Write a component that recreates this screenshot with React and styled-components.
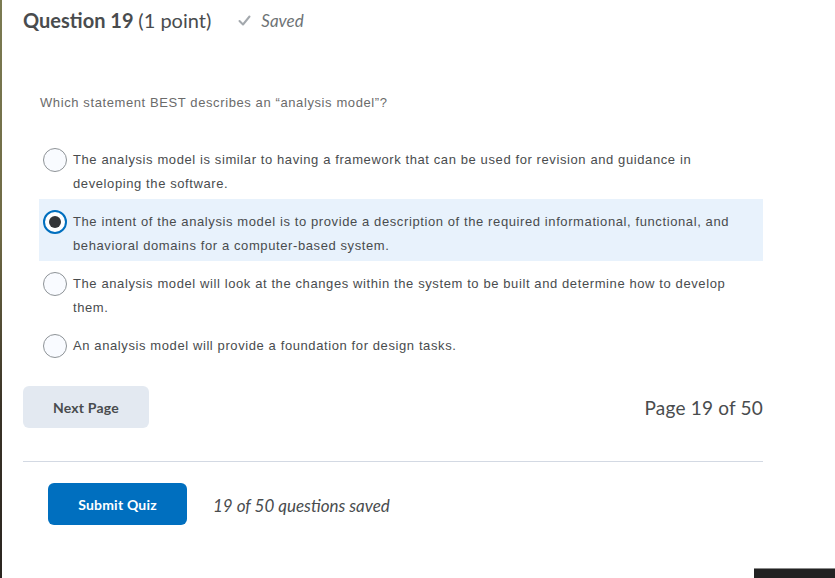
import React from "react";
import styled, { createGlobalStyle } from "styled-components";

const Global = createGlobalStyle`
  html, body { margin: 0; padding: 0; background: #fff; }
  body { font-family: "Lato", "Liberation Sans", sans-serif; }
  * { box-sizing: border-box; }
`;

const Page = styled.div`
  position: relative;
  width: 835px;
  height: 578px;
  overflow: hidden;
  background: #fff;
  border-left: 2px solid transparent;
  border-image: linear-gradient(to bottom, #7b7b52 0%, #6f6a45 40%, #3a3327 70%, #2a2520 100%) 1;
  padding-left: 21px;
`;

const Content = styled.div`
  width: 740px;
  display: flex;
  flex-direction: column;
`;

const Header = styled.div`
  display: flex;
  align-items: center;
  height: 24px;
  margin-top: 8px;
`;

const Title = styled.h2`
  margin: 0;
  font-family: "Lato", sans-serif;
  font-size: 20px;
  line-height: 24px;
  font-weight: 700;
  color: #494c4e;
`;

const Points = styled.span`
  font-weight: 400;
`;

const SavedTag = styled.div`
  display: flex;
  align-items: center;
  margin-left: 27px;
  gap: 10px;
  font-family: "Lato", sans-serif;
  font-style: italic;
  font-size: 17px;
  color: #6e7376;
`;

const QuestionBlock = styled.div`
  margin-top: 61px;
  margin-left: 16px;
  display: flex;
  flex-direction: column;
`;

const Prompt = styled.p`
  margin: 0 0 0 1px;
  font-family: "Liberation Sans", Arial, sans-serif;
  font-size: 13px;
  letter-spacing: 0.6px;
  line-height: 20px;
  color: #6b6b6b;
`;

const Options = styled.div`
  margin-top: 24px;
  display: flex;
  flex-direction: column;
`;

const OptionRow = styled.label`
  display: flex;
  align-items: flex-start;
  gap: 6px;
  padding: 11px 20px 3px 4px;
  background: ${(p) => (p.$selected ? "#e8f2fc" : "transparent")};
`;

const Radio = styled.span`
  flex: 0 0 24px;
  width: 24px;
  height: 24px;
  border-radius: 50%;
  display: flex;
  align-items: center;
  justify-content: center;
  background: ${(p) => (p.$checked ? "#fff" : "#f9fbff")};
  border: ${(p) => (p.$checked ? "2px solid #006fbf" : "1px solid #8e9397")};
`;

const Dot = styled.span`
  width: 12px;
  height: 12px;
  border-radius: 50%;
  background: #333537;
`;

const OptionText = styled.span`
  font-family: "Liberation Sans", Arial, sans-serif;
  font-size: 13px;
  letter-spacing: 0.6px;
  line-height: 24px;
  color: #494c4e;
`;

const NavRow = styled.div`
  margin-top: 25px;
  display: flex;
  align-items: center;
  justify-content: space-between;
`;

const Button = styled.button`
  height: 42px;
  border: none;
  border-radius: 6px;
  font-family: "Lato", sans-serif;
  font-weight: 700;
  font-size: 14px;
  letter-spacing: 0.2px;
  cursor: pointer;
  background: ${(p) => (p.$primary ? "#006fbf" : "#e3e9f1")};
  color: ${(p) => (p.$primary ? "#ffffff" : "#494c4e")};
  width: ${(p) => p.$w}px;
  padding: 0;
`;

const PageCount = styled.div`
  font-family: "Lato", sans-serif;
  font-size: 19px;
  letter-spacing: 0.2px;
  color: #494c4e;
`;

const Rule = styled.hr`
  margin: 33px 0 0 0;
  border: none;
  border-top: 1px solid #d3d9e3;
`;

const SubmitRow = styled.div`
  margin-top: 21px;
  padding-left: 25px;
  display: flex;
  align-items: center;
  gap: 26px;
`;

const SavedCount = styled.span`
  font-family: "Lato", sans-serif;
  font-style: italic;
  font-size: 17px;
  color: #494c4e;
  margin-top: 3px;
`;

const CornerBar = styled.div`
  position: absolute;
  right: 0;
  bottom: 0;
  width: 81px;
  height: 10px;
  background: #222;
  border-top: 1px solid #8a8a8a;
`;

const options = [
  "The analysis model is similar to having a framework that can be used for revision and guidance in developing the software.",
  "The intent of the analysis model is to provide a description of the required informational, functional, and behavioral domains for a computer-based system.",
  "The analysis model will look at the changes within the system to be built and determine how to develop them.",
  "An analysis model will provide a foundation for design tasks.",
];

export default function App() {
  const selected = 1;
  return (
    <>
      <Global />
      <Page>
        <Content>
          <Header>
            <Title>
              Question 19 <Points>(1 point)</Points>
            </Title>
            <SavedTag>
              <svg width="13" height="11" viewBox="0 0 13 11">
                <path d="M1.5 6 L5 9.5 L11.5 1.5" fill="none" stroke="#a3a8ad" strokeWidth="2" strokeLinecap="round" strokeLinejoin="round" />
              </svg>
              Saved
            </SavedTag>
          </Header>
          <QuestionBlock>
            <Prompt>Which statement BEST describes an “analysis model”?</Prompt>
            <Options>
              {options.map((t, i) => (
                <OptionRow key={i} $selected={i === selected}>
                  <Radio $checked={i === selected}>{i === selected && <Dot />}</Radio>
                  <OptionText>{t}</OptionText>
                </OptionRow>
              ))}
            </Options>
          </QuestionBlock>
          <NavRow>
            <Button $w={126}>Next Page</Button>
            <PageCount>Page 19 of 50</PageCount>
          </NavRow>
          <Rule />
          <SubmitRow>
            <Button $primary $w={139}>Submit Quiz</Button>
            <SavedCount>19 of 50 questions saved</SavedCount>
          </SubmitRow>
        </Content>
        <CornerBar />
      </Page>
    </>
  );
}
